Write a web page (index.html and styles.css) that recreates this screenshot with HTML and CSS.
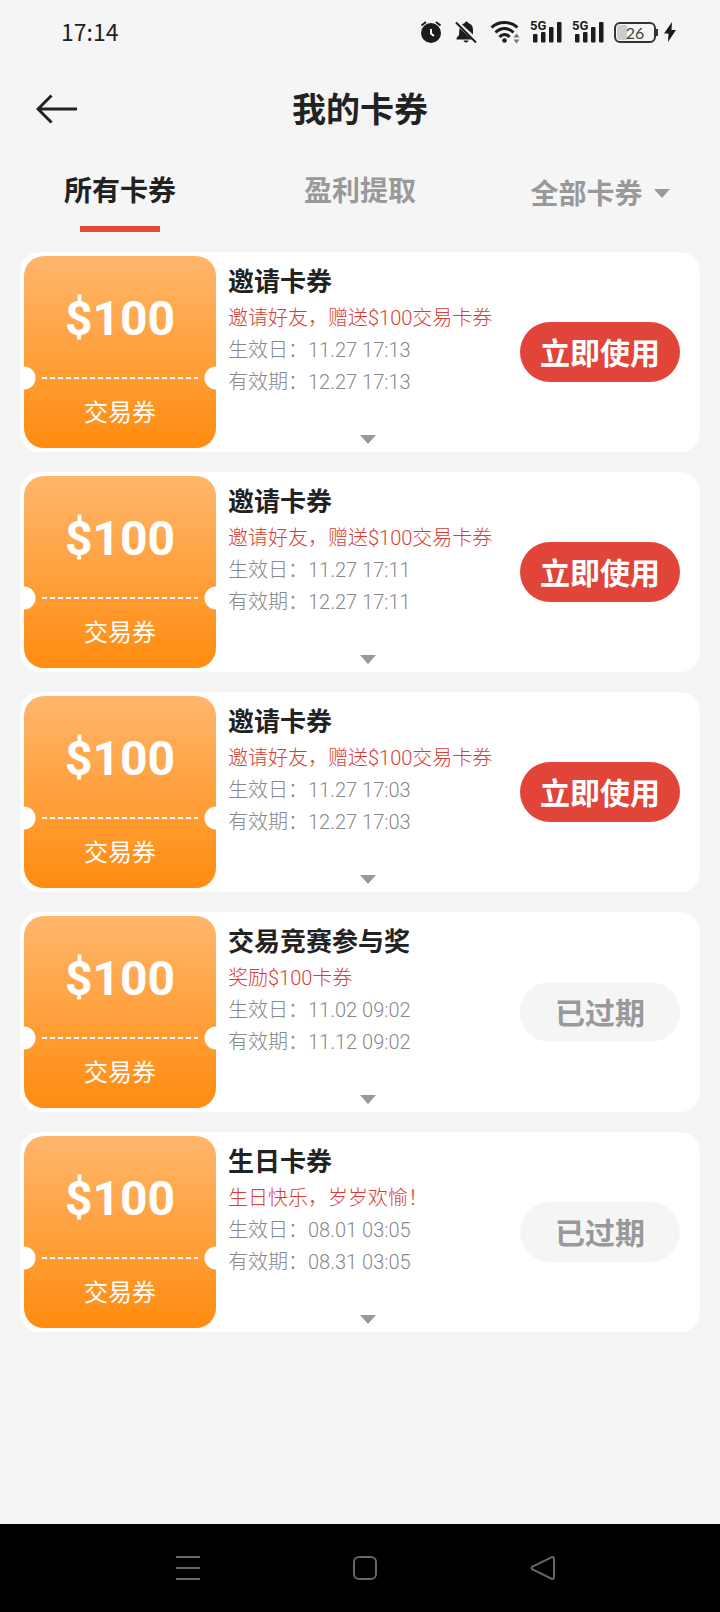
FILE: index.html
```html
<!DOCTYPE html>
<html lang="zh-CN">
<head>
<meta charset="utf-8">
<meta name="viewport" content="width=device-width, initial-scale=1">
<title>我的卡券</title>
<link rel="stylesheet" href="styles.css">
</head>
<body>
<svg width="0" height="0" class="defs" aria-hidden="true">
  <symbol id="caret" viewBox="0 0 16 9"><path d="M0 0h16L8 9z"/></symbol>
  <symbol id="signal" viewBox="0 0 32 24">
    <rect x="3" y="14" width="4.500" height="8.500" rx="1"/>
    <rect x="11" y="12" width="4.500" height="10.500" rx="1"/>
    <rect x="19" y="7" width="4.500" height="15.500" rx="1"/>
    <rect x="27" y="2" width="4.500" height="20.500" rx="1"/>
  </symbol>
</svg>

<div class="status">
  <time class="clock">17:14</time>
  <div class="status-icons">
    <svg width="25" height="24" viewBox="0 0 25 24" aria-hidden="true">
      <circle cx="11" cy="13" r="10"/>
      <path class="line" d="M1.500 5.500 6 2M20.500 5.500 16 2"/>
      <path class="hand" d="M11 9v4.500l3 2.500"/>
    </svg>
    <svg width="25" height="24" viewBox="0 0 25 24" aria-hidden="true">
      <path d="M7 4.500Q8 3.600 9.500 3.200 9.800 1.500 11.500 1.500T13.500 3.200C17 4.200 18 7 18 10v4.500L7 4.500zM4.500 8 17 19.500H1.500v-1.500l2.500-3zM8.500 20.500h5q-.5 2-2.500 2t-2.500-2z"/>
      <path class="line" d="M1 2.500 21 22.500"/>
    </svg>
    <svg width="30" height="24" viewBox="0 0 30 24" aria-hidden="true">
      <path class="arc" d="M1.500 7.500Q7 2.500 14.500 2.500t13 5M5.500 12.500Q9.500 8.500 14.500 8.500t9 4M9.500 17q2-2.500 5-2.500t5 2.500"/>
      <circle cx="14.500" cy="20.500" r="2.300"/>
      <path class="dim" d="M23.500 17.500h6l-3-4zM23.500 19.500h6l-3 4z"/>
    </svg>
    <span class="cell"><svg width="32" height="24" aria-hidden="true"><use href="#signal"/></svg><span class="gen">5G</span></span>
    <span class="cell"><svg width="32" height="24" aria-hidden="true"><use href="#signal"/></svg><span class="gen">5G</span></span>
    <span class="power">
      <span class="battery">26</span>
      <svg width="14" height="22" viewBox="0 0 14 22" aria-hidden="true"><path d="M9 1 1 12.500h4.500L5 21l8-12H8.500z"/></svg>
    </span>
  </div>
</div>

<header class="header">
  <button class="back" type="button" aria-label="返回">
    <svg width="42" height="30" viewBox="0 0 42 30" aria-hidden="true"><path d="M41 15H2M15.500 1.500 2 15l13.500 13.500"/></svg>
  </button>
  <h1 class="heading">我的卡券</h1>
</header>

<nav class="tabs">
  <button class="tab active" type="button">所有卡券</button>
  <button class="tab" type="button">盈利提取</button>
  <div class="filter">
    <select class="filter-select" aria-label="卡券类型"><option>全部卡券</option></select>
    <svg class="caret" width="16" height="9" aria-hidden="true"><use href="#caret"/></svg>
  </div>
</nav>

<main class="list">
  <article class="card">
    <div class="ticket"><strong class="amount">$100</strong><hr class="tear"><span class="kind">交易券</span></div>
    <div class="info">
      <h2 class="title">邀请卡券</h2>
      <p class="note">邀请好友，赠送$100交易卡券</p>
      <p class="date">生效日：11.27 17:13</p>
      <p class="date">有效期：12.27 17:13</p>
      <button class="more" type="button" aria-label="展开"><svg class="caret" width="16" height="9" aria-hidden="true"><use href="#caret"/></svg></button>
    </div>
    <button class="action" type="button">立即使用</button>
  </article>

  <article class="card">
    <div class="ticket"><strong class="amount">$100</strong><hr class="tear"><span class="kind">交易券</span></div>
    <div class="info">
      <h2 class="title">邀请卡券</h2>
      <p class="note">邀请好友，赠送$100交易卡券</p>
      <p class="date">生效日：11.27 17:11</p>
      <p class="date">有效期：12.27 17:11</p>
      <button class="more" type="button" aria-label="展开"><svg class="caret" width="16" height="9" aria-hidden="true"><use href="#caret"/></svg></button>
    </div>
    <button class="action" type="button">立即使用</button>
  </article>

  <article class="card">
    <div class="ticket"><strong class="amount">$100</strong><hr class="tear"><span class="kind">交易券</span></div>
    <div class="info">
      <h2 class="title">邀请卡券</h2>
      <p class="note">邀请好友，赠送$100交易卡券</p>
      <p class="date">生效日：11.27 17:03</p>
      <p class="date">有效期：12.27 17:03</p>
      <button class="more" type="button" aria-label="展开"><svg class="caret" width="16" height="9" aria-hidden="true"><use href="#caret"/></svg></button>
    </div>
    <button class="action" type="button">立即使用</button>
  </article>

  <article class="card">
    <div class="ticket"><strong class="amount">$100</strong><hr class="tear"><span class="kind">交易券</span></div>
    <div class="info">
      <h2 class="title">交易竞赛参与奖</h2>
      <p class="note">奖励$100卡券</p>
      <p class="date">生效日：11.02 09:02</p>
      <p class="date">有效期：11.12 09:02</p>
      <button class="more" type="button" aria-label="展开"><svg class="caret" width="16" height="9" aria-hidden="true"><use href="#caret"/></svg></button>
    </div>
    <button class="action" type="button" disabled>已过期</button>
  </article>

  <article class="card">
    <div class="ticket"><strong class="amount">$100</strong><hr class="tear"><span class="kind">交易券</span></div>
    <div class="info">
      <h2 class="title">生日卡券</h2>
      <p class="note">生日快乐，岁岁欢愉！</p>
      <p class="date">生效日：08.01 03:05</p>
      <p class="date">有效期：08.31 03:05</p>
      <button class="more" type="button" aria-label="展开"><svg class="caret" width="16" height="9" aria-hidden="true"><use href="#caret"/></svg></button>
    </div>
    <button class="action" type="button" disabled>已过期</button>
  </article>
</main>

<footer class="system-nav">
  <button type="button" aria-label="最近任务"><svg width="26" height="26" viewBox="0 0 26 26" aria-hidden="true"><path d="M1 2h24M1 13h24M1 24h24"/></svg></button>
  <button type="button" aria-label="主屏幕"><svg width="26" height="26" viewBox="0 0 26 26" aria-hidden="true"><rect x="2" y="2" width="22" height="22" rx="5"/></svg></button>
  <button type="button" aria-label="后退"><svg width="26" height="26" viewBox="0 0 26 26" aria-hidden="true"><path d="M21.500 2.300 2.500 11.500q-2 1.500 0 3l19 9.200q2.500.8 2.500-1.700V4q0-2.500-2.500-1.700z"/></svg></button>
</footer>
</body>
</html>
```
FILE: styles.css
```css
* {
  box-sizing: border-box;
}

body {
  display: flex;
  flex-direction: column;
  min-height: 100vh;
  margin: 0;
  background: #f5f5f5;
  color: #222;
  font-family: Roboto, "Noto Sans CJK SC", sans-serif;
}

button,
select {
  padding: 0;
  border: 0;
  background: none;
  color: inherit;
  font: inherit;
}

svg {
  display: block;
  flex: none;
}

.defs {
  position: absolute;
}

.caret {
  fill: #999;
}

/* Status bar */
.status {
  display: flex;
  align-items: center;
  justify-content: space-between;
  height: 64px;
  padding: 0 43px 0 61px;
}

.clock {
  padding-bottom: 2px;
  font-family: "Noto Sans CJK SC", sans-serif;
  font-size: 23px;
  line-height: 32px;
}

.status-icons {
  display: flex;
  align-items: center;
  gap: 10px;
  fill: #1c1c1c;
}

.status-icons .line,
.status-icons .hand,
.status-icons .arc {
  fill: none;
  stroke: #1c1c1c;
  stroke-width: 2;
}

.status-icons .hand {
  stroke: #f5f5f5;
}

.status-icons .arc {
  stroke-width: 3;
}

.status-icons .dim {
  fill: #777;
}

.cell {
  position: relative;
}

.gen {
  position: absolute;
  top: 0;
  left: 0;
  background: #f5f5f5;
  font-size: 13px;
  font-weight: 700;
  line-height: 12px;
}

.power {
  display: flex;
  align-items: center;
  gap: 7px;
}

.battery {
  position: relative;
  width: 42px;
  height: 21px;
  border: 2px solid #333;
  border-radius: 6px;
  background: linear-gradient(90deg, #ccc 10px, transparent 10px) content-box;
  padding: 1px;
  color: #444;
  font-family: Lato, sans-serif;
  font-size: 16px;
  line-height: 15px;
  text-align: center;
}

.battery::after {
  content: "";
  position: absolute;
  top: 5px;
  right: -4px;
  width: 2px;
  height: 7px;
  background: #333;
}

/* Page header */
.header {
  display: grid;
  grid-template-columns: 42px 1fr 42px;
  align-items: center;
  height: 90px;
  padding: 0 36px;
}

.back svg {
  fill: none;
  stroke: #222;
  stroke-width: 3;
}

.heading {
  margin: 0;
  padding-top: 2px;
  font-size: 34px;
  font-weight: 700;
  line-height: 48px;
  text-align: center;
}

/* Tabs */
.tabs {
  display: grid;
  grid-template-columns: repeat(3, 1fr);
  height: 78px;
  color: #999;
  font-size: 28px;
  font-weight: 700;
  line-height: 40px;
}

.tab {
  display: flex;
  flex-direction: column;
  align-items: center;
  justify-content: space-between;
  padding-top: 18px;
}

.tab.active {
  color: #222;
}

.tab::after {
  content: "";
  width: 80px;
  height: 6px;
}

.tab.active::after {
  background: #e04a3a;
}

.filter {
  display: flex;
  align-items: center;
  justify-content: center;
  gap: 10px;
}

.filter-select {
  appearance: none;
  height: 44px;
  padding-top: 4px;
}

/* Coupon list */
.list {
  display: flex;
  flex: 1;
  flex-direction: column;
  gap: 20px;
  padding: 20px;
}

.card {
  display: flex;
  align-items: center;
  gap: 12px;
  min-height: 200px;
  padding: 4px 20px 4px 4px;
  border-radius: 20px;
  background: #fff;
}

.ticket {
  display: flex;
  flex: none;
  flex-direction: column;
  align-items: center;
  width: 192px;
  height: 192px;
  padding-top: 35px;
  border-radius: 20px;
  background:
    radial-gradient(circle at 0 122px, #fff 11px, transparent 12px),
    radial-gradient(circle at 100% 122px, #fff 11px, transparent 12px),
    linear-gradient(#ffb66c, #ff8c10);
  color: #fff;
}

.amount {
  font-size: 48px;
  font-weight: 700;
  line-height: 56px;
}

.tear {
  width: 156px;
  height: 2px;
  margin: 30px 0 18px;
  border: 0;
  background: repeating-linear-gradient(90deg, #fff 0 5px, transparent 5px 8px);
}

.kind {
  font-size: 24px;
  line-height: 32px;
}

.info {
  display: flex;
  flex: 1;
  flex-direction: column;
  align-self: stretch;
  padding-top: 7px;
}

.title,
.note,
.date {
  margin: 0;
}

.title {
  font-size: 26px;
  font-weight: 700;
  line-height: 38px;
}

.note,
.date {
  font-size: 20px;
  font-weight: 300;
  line-height: 32px;
}

.note {
  padding-top: 1px;
  color: #d93c35;
}

.date {
  color: #888;
}

.more {
  align-self: center;
  margin-top: auto;
  padding: 4px;
}

.action {
  flex: none;
  width: 160px;
  height: 60px;
  padding-bottom: 3px;
  border-radius: 30px;
  background: #e14439;
  color: #fff;
  font-size: 30px;
  font-weight: 700;
}

.action:disabled {
  background: #f5f5f5;
  color: #999;
}

/* System navigation */
.system-nav {
  display: flex;
  align-items: center;
  justify-content: space-around;
  height: 88px;
  padding: 0 88px 0 99px;
  background: #000;
}

.system-nav svg {
  fill: none;
  stroke: #666;
  stroke-width: 2;
}
```
